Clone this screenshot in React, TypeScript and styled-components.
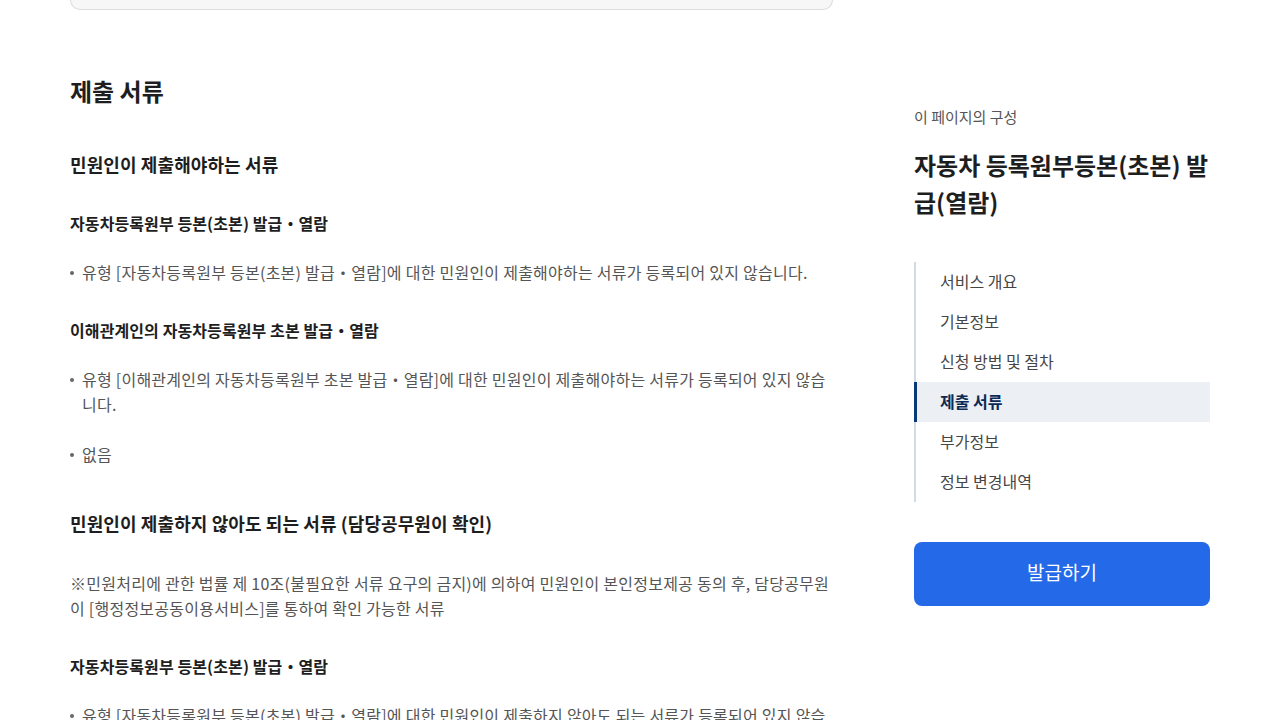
import styled, { createGlobalStyle } from 'styled-components';

const GlobalStyle = createGlobalStyle`
  html, body {
    margin: 0;
    padding: 0;
    background: #ffffff;
    font-family: "Noto Sans CJK KR", "Noto Sans", sans-serif;
    color: #1e1e1e;
  }
  * {
    box-sizing: border-box;
  }
`;

type Section = {
  title: string;
  note?: string;
  groups: { name: string; items: string[] }[];
};

const sections: Section[] = [
  {
    title: '민원인이 제출해야하는 서류',
    groups: [
      {
        name: '자동차등록원부 등본(초본) 발급・열람',
        items: ['유형 [자동차등록원부 등본(초본) 발급・열람]에 대한 민원인이 제출해야하는 서류가 등록되어 있지 않습니다.'],
      },
      {
        name: '이해관계인의 자동차등록원부 초본 발급・열람',
        items: [
          '유형 [이해관계인의 자동차등록원부 초본 발급・열람]에 대한 민원인이 제출해야하는 서류가 등록되어 있지 않습니다.',
          '없음',
        ],
      },
    ],
  },
  {
    title: '민원인이 제출하지 않아도 되는 서류 (담당공무원이 확인)',
    note: '※민원처리에 관한 법률 제 10조(불필요한 서류 요구의 금지)에 의하여 민원인이 본인정보제공 동의 후, 담당공무원이 [행정정보공동이용서비스]를 통하여 확인 가능한 서류',
    groups: [
      {
        name: '자동차등록원부 등본(초본) 발급・열람',
        items: ['유형 [자동차등록원부 등본(초본) 발급・열람]에 대한 민원인이 제출하지 않아도 되는 서류가 등록되어 있지 않습니다.'],
      },
    ],
  },
];

const navItems = ['서비스 개요', '기본정보', '신청 방법 및 절차', '제출 서류', '부가정보', '정보 변경내역'];

export default function App() {
  return (
    <>
      <GlobalStyle />
      <Page>
        <Main>
          <TopCard />
          <PageTitle>제출 서류</PageTitle>
          {sections.map((s) => (
            <div key={s.title}>
              <SectionTitle>{s.title}</SectionTitle>
              {s.note && <Note>{s.note}</Note>}
              {s.groups.map((g) => (
                <div key={g.name}>
                  <GroupTitle>{g.name}</GroupTitle>
                  <BulletList>
                    {g.items.map((it) => (
                      <Bullet key={it}>{it}</Bullet>
                    ))}
                  </BulletList>
                </div>
              ))}
            </div>
          ))}
        </Main>
        <Aside>
          <AsideLabel>이 페이지의 구성</AsideLabel>
          <AsideTitle>자동차 등록원부등본(초본) 발급(열람)</AsideTitle>
          <Nav>
            {navItems.map((n) => (
              <NavItem key={n} $active={n === '제출 서류'}>
                {n}
              </NavItem>
            ))}
          </Nav>
          <IssueButton>발급하기</IssueButton>
        </Aside>
      </Page>
    </>
  );
}

const Page = styled.div`
  display: flex;
  align-items: flex-start;
  gap: 81px;
  padding-left: 70px;
  height: 720px;
  overflow: hidden;
`;

const Main = styled.main`
  width: 763px;
  flex-shrink: 0;
`;

const TopCard = styled.div`
  height: 10px;
  background: #f7f7f7;
  border: 1px solid #dcdcdc;
  border-top: none;
  border-radius: 0 0 12px 12px;
`;

const PageTitle = styled.h2`
  margin: 64px 0 0;
  font-size: 24px;
  line-height: 34px;
  font-weight: 700;
  color: #1e1e1e;
`;

const SectionTitle = styled.h3`
  margin: 42px 0 0;
  font-size: 18px;
  line-height: 28px;
  font-weight: 700;
  letter-spacing: 0.1px;
  color: #1e1e1e;
`;

const GroupTitle = styled.h4`
  margin: 32px 0 0;
  font-size: 16px;
  line-height: 26px;
  font-weight: 700;
  letter-spacing: 0.1px;
  color: #1e1e1e;
`;

const Note = styled.p`
  margin: 34px 0 0;
  font-size: 16px;
  line-height: 25px;
  letter-spacing: 0.25px;
  color: #555555;
`;

const BulletList = styled.ul`
  list-style: none;
  margin: 24px 0 0;
  padding: 0;
  display: flex;
  flex-direction: column;
  gap: 25px;
`;

const Bullet = styled.li`
  position: relative;
  padding-left: 12px;
  font-size: 16px;
  line-height: 25px;
  letter-spacing: 0.25px;
  color: #555555;

  &::before {
    content: '';
    position: absolute;
    left: 0;
    top: 11px;
    width: 4px;
    height: 4px;
    border-radius: 50%;
    background: #666666;
  }
`;

const Aside = styled.aside`
  width: 296px;
  flex-shrink: 0;
  padding-top: 106px;
`;

const AsideLabel = styled.div`
  font-size: 15px;
  line-height: 22px;
  color: #555555;
`;

const AsideTitle = styled.h2`
  margin: 18px 0 0;
  font-size: 24px;
  line-height: 37px;
  font-weight: 700;
  color: #1e1e1e;
`;

const Nav = styled.nav`
  margin-top: 42px;
  border-left: 2px solid #d2dae6;
  display: flex;
  flex-direction: column;
`;

const NavItem = styled.a<{ $active?: boolean }>`
  display: flex;
  align-items: center;
  height: 40px;
  margin-left: -2px;
  padding: 0 0 3px 23px;
  font-size: 16px;
  color: ${(p) => (p.$active ? '#0b2a55' : '#464646')};
  font-weight: ${(p) => (p.$active ? 700 : 400)};
  background: ${(p) => (p.$active ? '#eceff4' : 'transparent')};
  border-left: 3px solid ${(p) => (p.$active ? '#063a7a' : 'transparent')};
  cursor: pointer;
`;

const IssueButton = styled.button`
  margin-top: 40px;
  width: 100%;
  height: 64px;
  padding: 0 0 5px;
  border: none;
  border-radius: 8px;
  background: #2369e8;
  color: #ffffff;
  font-family: inherit;
  font-size: 19px;
  cursor: pointer;
`;
